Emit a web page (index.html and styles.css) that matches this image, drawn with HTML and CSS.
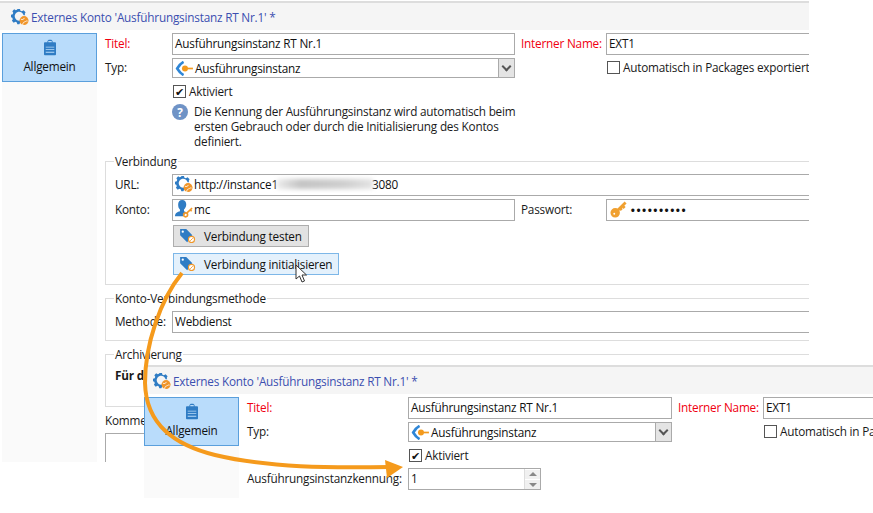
FILE: index.html
```html
<!DOCTYPE html>
<html lang="de">
<head>
  <meta charset="UTF-8" />
  <title>Externes Konto</title>
  <link rel="stylesheet" href="styles.css">
</head>
<body>
  <svg class="defs" width="0" height="0">
    <defs>
      <symbol id="gear" viewBox="0 0 20 20">
        <path fill="#2f7cc4" d="M7 1h3l.5 2 1.6.7L14 2.6l2.2 2.1-1 1.9.6 1.4H14a5 5 0 1 0-4 6v2.8l-.7 1.2H7l-.5-2-1.6-.7-1.9 1.1-2-2.1 1-1.900-.6-1.500L0 10.300V7.400l1.900-.5.6-1.500-1-1.900 2-2.100 1.900 1.100 1.600-.7z"/>
        <circle cx="14.500" cy="14" r="5" fill="#f0952a"/>
        <path fill="none" stroke="#fff" stroke-width=".9" d="M11 12.500c2 .8 3 .2 4-1.500M13 19c0-2 .5-3 2-3.500s2-1.500 3.500-1"/>
      </symbol>
      <symbol id="route" viewBox="0 0 20 16">
        <path fill="none" stroke="#2f86d6" stroke-width="2.800" d="M9 1C6 2.500 4 5 2.200 8c1.800 3 3.800 5.500 6.800 7"/>
        <circle cx="10.500" cy="8" r="3.200" fill="#f39a1e"/>
        <path stroke="#f39a1e" stroke-width="1.800" d="M10 8h9"/>
      </symbol>
      <symbol id="clip" viewBox="0 0 14 18">
        <path fill="#2f7cc4" d="M1 3h3V1.500L5.500 0h3L10 1.500V3h3a1 1 0 0 1 1 1v13a1 1 0 0 1-1 1H1a1 1 0 0 1-1-1V4a1 1 0 0 1 1-1z"/>
        <path fill="#bcdcf8" d="M5 1.500h4V3H5zM2 8h10v1H2zm0 3h10v1H2zm0 3h10v1H2z"/>
      </symbol>
      <symbol id="user" viewBox="0 0 20 20">
        <path fill="#2f7cc4" d="M8 0c3 0 4.500 2.200 4.500 5S11 9.500 10 10.500v2c1 .3 2 .8 2.500 1.200L9 18H0c0-3.500 3-5 5.500-5.500v-2C4 9.500 3.500 7.500 3.500 5 3.500 2.200 5 0 8 0z"/>
        <path fill="none" stroke="#f0982a" stroke-width="1.800" d="M13 14.500l6-5.500M17 11l1.500 1.500"/>
        <circle cx="11.800" cy="16.500" r="2.200" fill="none" stroke="#f0982a" stroke-width="1.800"/>
      </symbol>
      <symbol id="key" viewBox="0 0 18 18">
        <path fill="none" stroke="#f0a030" stroke-width="3" d="M8 10L16.500 1.500M13 5l2.500 2.500M10.500 7.500l2 2"/>
        <circle cx="5.500" cy="12.500" r="3.700" fill="#f0a030" stroke="#f0a030" stroke-width="2.600"/>
        <circle cx="4.500" cy="13.500" r="1" fill="#fff"/>
      </symbol>
      <symbol id="tag" viewBox="0 0 18 16">
        <path fill="#2f7cc4" d="M0 0h7l7 7-2 2a5 5 0 0 0-3 5l-1 1L0 7z"/>
        <circle cx="3" cy="3" r="1.300" fill="#fff"/>
        <circle cx="13" cy="12" r="3.500" fill="#fff" stroke="#f0982a" stroke-width="1.300"/>
        <path stroke="#f0982a" d="M11.500 13.500l3-3"/>
      </symbol>
    </defs>
  </svg>

  <section class="window window-back">
    <header class="win-head"><svg class="i-gear"><use href="#gear"/></svg>Externes Konto 'Ausführungsinstanz RT Nr.1' *</header>
    <div class="win-body">
      <aside class="side">
        <div class="tab"><svg class="i-clip"><use href="#clip"/></svg>Allgemein</div>
      </aside>
      <div class="main">
        <div class="row">
          <label class="lbl req">Titel:</label>
          <div class="field w-343">Ausführungsinstanz RT Nr.1</div>
          <label class="lbl req lbl-right">Interner Name:</label>
          <div class="field w-rest">EXT1</div>
        </div>
        <div class="row row-select">
          <label class="lbl">Typ:</label>
          <div class="field select w-343"><svg class="i-route"><use href="#route"/></svg>Ausführungsinstanz<span class="drop"></span></div>
          <span class="lbl-right"></span>
          <div class="check-row"><span class="box"></span>Automatisch in Packages exportiert</div>
        </div>
        <div class="check-row checked-row"><span class="box on">✔</span>Aktiviert</div>
        <div class="hint">
          <span class="qmark">?</span>
          <p>Die Kennung der Ausführungsinstanz wird automatisch beim<br>ersten Gebrauch oder durch die Initialisierung des Kontos<br>definiert.</p>
        </div>

        <fieldset class="group group-conn">
          <legend>Verbindung</legend>
          <div class="row">
            <label class="lbl-in">URL:</label>
            <div class="field grow"><svg class="i-gear"><use href="#gear"/></svg>http://instance1<span class="blur"></span>3080</div>
          </div>
          <div class="row row-account">
            <label class="lbl-in">Konto:</label>
            <div class="field w-343"><svg class="i-user"><use href="#user"/></svg>mc</div>
            <label class="lbl lbl-right">Passwort:</label>
            <div class="field w-rest"><svg class="i-key"><use href="#key"/></svg><span class="dots">••••••••••</span></div>
          </div>
          <button class="btn"><svg class="i-tag"><use href="#tag"/></svg>Verbindung testen</button>
          <button class="btn btn-hover"><svg class="i-tag"><use href="#tag"/></svg>Verbindung initialisieren</button>
        </fieldset>

        <fieldset class="group group-method">
          <legend>Konto-Verbindungsmethode</legend>
          <div class="row">
            <label class="lbl-in">Methode:</label>
            <div class="field grow">Webdienst</div>
          </div>
        </fieldset>

        <fieldset class="group group-archive">
          <legend>Archivierung</legend>
          <b>Für die</b>
        </fieldset>

        <div class="comment-label">Kommentar</div>
        <div class="comment"></div>
      </div>
    </div>
  </section>

  <svg class="cursor" width="13" height="20" viewBox="0 0 13 20">
    <path fill="#fff" stroke="#333" d="M1 1v14l3.500-3 2.500 6 2.500-1-2.500-6h4.500z"/>
  </svg>

  <section class="window window-front">
    <header class="win-head"><svg class="i-gear"><use href="#gear"/></svg>Externes Konto 'Ausführungsinstanz RT Nr.1' *</header>
    <div class="win-body">
      <aside class="side">
        <div class="tab"><svg class="i-clip"><use href="#clip"/></svg>Allgemein</div>
      </aside>
      <div class="main">
        <div class="row">
          <label class="lbl req">Titel:</label>
          <div class="field w-264">Ausführungsinstanz RT Nr.1</div>
          <label class="lbl req lbl-right">Interner Name:</label>
          <div class="field w-rest">EXT1</div>
        </div>
        <div class="row row-select">
          <label class="lbl">Typ:</label>
          <div class="field select w-264"><svg class="i-route"><use href="#route"/></svg>Ausführungsinstanz<span class="drop"></span></div>
          <span class="lbl-right"></span>
          <div class="check-row"><span class="box"></span>Automatisch in Packages exportiert</div>
        </div>
        <div class="check-row checked-row"><span class="box on">✔</span>Aktiviert</div>
        <div class="row row-spin">
          <label class="lbl">Ausführungsinstanzkennung:</label>
          <div class="field spin">1<span class="spinner"><i class="up"></i><i class="down"></i></span></div>
        </div>
      </div>
    </div>
  </section>

  <svg class="arrow" width="873" height="513" viewBox="0 0 873 513">
    <path fill="none" stroke="#f59a1c" stroke-width="4" d="M182 273C160 300 145 345 145 383C146 425 175 445 215 455C270 468 330 468 390 467"/>
    <path fill="#f59a1c" d="M385 460L403 467L387 478z"/>
  </svg>
</body>
</html>
```

FILE: styles.css
```css
* {
  box-sizing: border-box;
}

body {
  margin: 0;
  width: 873px;
  height: 513px;
  position: relative;
  overflow: hidden;
  background: #fff;
  color: #1a1a1a;
  font-family: "Open Sans", "Noto Sans", sans-serif;
  font-size: 11.75px;
  letter-spacing: -0.2px;
}

.defs {
  position: absolute;
}

/* the two screenshots pasted on the canvas */
.window {
  position: absolute;
  background: #fff;
  overflow: hidden;
}

.window-back {
  left: 0;
  top: 0;
  width: 809px;
  height: 462px;
}

.window-front {
  left: 144px;
  top: 364px;
  width: 729px;
  height: 134px;
}

.win-head {
  height: 29px;
  margin-top: 1px;
  border-top: 2px solid #ddd;
  background: #f5f5f5;
  display: flex;
  align-items: center;
  padding-left: 11px;
  color: #3b4fb0;
}

.window-front .win-head {
  padding-left: 9px;
}

.win-head .i-gear {
  margin-right: 2px;
}

.win-body {
  display: flex;
  padding-top: 3px;
}

.side {
  width: 95px;
  flex: none;
  margin-left: 2px;
  background: #fafafa;
  height: 430px;
}

.window-front .side {
  margin-left: 0;
}

.tab {
  height: 49px;
  background: #b9dcfb;
  border: 1px solid #5a9fdc;
  display: flex;
  flex-direction: column;
  align-items: center;
  padding-top: 5px;
  gap: 2px;
  line-height: 16px;
  color: #111;
}

.main {
  flex: none;
  width: 800px;
  padding-left: 8px;
}

.row {
  display: flex;
  align-items: center;
}

.row-select {
  margin-top: 3px;
}

.lbl {
  width: 67px;
  flex: none;
  height: 20px;
  line-height: 18px;
  white-space: nowrap;
}

.window-front .lbl {
  width: 161px;
}

.req {
  color: #f00010;
}

.lbl-right,
.window-front .lbl-right {
  width: 85px;
  margin-left: 6px;
  flex: none;
}

.field {
  height: 22px;
  border: 1px solid #aaa;
  background: #fff;
  display: flex;
  align-items: center;
  padding: 0 0 2px 2px;
  color: #111;
  white-space: nowrap;
}

.w-343 {
  width: 343px;
  flex: none;
}

.w-264 {
  width: 264px;
  flex: none;
}

.w-rest {
  width: 300px;
  flex: none;
}

.grow {
  flex: 1;
  margin-right: -100px;
}

.select {
  height: 20px;
  padding-bottom: 0;
  position: relative;
}

.drop {
  position: absolute;
  right: 0;
  top: 0;
  width: 16px;
  height: 18px;
  background: #e4e4e4;
  border-left: 1px solid #aaa;
}

.drop::after {
  content: "";
  position: absolute;
  left: 4px;
  top: 4px;
  width: 5px;
  height: 5px;
  border-right: 2px solid #555;
  border-bottom: 2px solid #555;
  transform: rotate(45deg);
}

.check-row {
  display: flex;
  align-items: center;
  gap: 3px;
  height: 15px;
  padding-bottom: 2px;
  white-space: nowrap;
}

.checked-row {
  margin: 6px 0 0 67px;
}

.window-front .checked-row {
  margin-left: 161px;
}

.box {
  width: 13px;
  height: 13px;
  border: 1px solid #555;
  margin: 1px 0 0 1px;
  flex: none;
  display: flex;
  align-items: center;
  justify-content: center;
  font-size: 11px;
  line-height: 1;
  color: #111;
}

.hint {
  display: flex;
  margin: 5px 0 0 67px;
  gap: 6px;
}

.hint p {
  margin: 0;
  line-height: 15px;
}

.qmark {
  width: 16px;
  height: 16px;
  flex: none;
  border-radius: 50%;
  background: #6f93c6;
  color: #fff;
  font-weight: 700;
  text-align: center;
  line-height: 16px;
}

.group {
  margin: 0;
  padding: 6px 0 0 9px;
  border: 1px solid #ddd;
  border-right: none;
  min-width: 0;
}

.group legend {
  padding: 0 1px;
  margin-left: -1px;
  line-height: 14px;
}

.group-conn {
  margin-top: 5px;
  height: 131px;
}

.group-method {
  margin-top: 6px;
  height: 50px;
}

.group-archive {
  margin-top: 6px;
  height: 60px;
}

.lbl-in {
  width: 57px;
  flex: none;
  padding-bottom: 2px;
}

.row-account {
  margin-top: 3px;
}

.i-gear {
  width: 18px;
  height: 18px;
  flex: none;
}

.field .i-gear,
.i-user {
  width: 18px;
  height: 18px;
  flex: none;
  margin-right: 1px;
}

.i-route {
  width: 19px;
  height: 15px;
  flex: none;
  margin-right: 1px;
}

.i-clip {
  width: 12px;
  height: 17px;
  flex: none;
}

.i-key {
  width: 17px;
  height: 17px;
  flex: none;
  margin: 0 3px 0 1px;
}

.i-tag {
  width: 16px;
  height: 14px;
  flex: none;
  margin-right: 8px;
}

.dots {
  font-size: 15px;
  letter-spacing: 0;
  padding-top: 2px;
}

.blur {
  width: 96px;
  height: 10px;
  margin: 0 -1px;
  background: linear-gradient(90deg, #ececec, #c4c4c4 25%, #cfcfcf 70%, #e4e4e4);
  filter: blur(2px);
}

.btn {
  display: flex;
  align-items: center;
  height: 22px;
  margin: 4px 0 0 58px;
  padding: 0 6px;
  background: #e2e2e2;
  border: 1px solid #adadad;
  font: inherit;
  letter-spacing: inherit;
  color: #111;
}

.btn + .btn {
  margin-top: 6px;
}

.btn-hover {
  background: #e4f1fc;
  border-color: #7db7e8;
}

.comment-label {
  margin-top: 6px;
  line-height: 15px;
}

.comment {
  height: 30px;
  margin-top: 5px;
  border: 1px solid #aaa;
  border-width: 1px 0 0 1px;
}

.row-spin {
  margin-top: 5px;
}

.spin {
  width: 133px;
  flex: none;
  position: relative;
}

.spinner {
  position: absolute;
  right: 0;
  top: 0;
  bottom: 0;
  width: 16px;
  border-left: 1px solid #ddd;
  display: flex;
  flex-direction: column;
  justify-content: center;
  gap: 1px;
}

.spinner i {
  height: 9px;
  background: #f0f0f0;
  position: relative;
}

.spinner i::after {
  content: "";
  position: absolute;
  left: 4px;
  border-left: 4px solid transparent;
  border-right: 4px solid transparent;
}

.spinner .up::after {
  top: 2px;
  border-bottom: 4px solid #888;
}

.spinner .down::after {
  top: 3px;
  border-top: 4px solid #888;
}

.cursor {
  position: absolute;
  left: 295px;
  top: 264px;
}

.arrow {
  position: absolute;
  left: 0;
  top: 0;
  pointer-events: none;
}
```
